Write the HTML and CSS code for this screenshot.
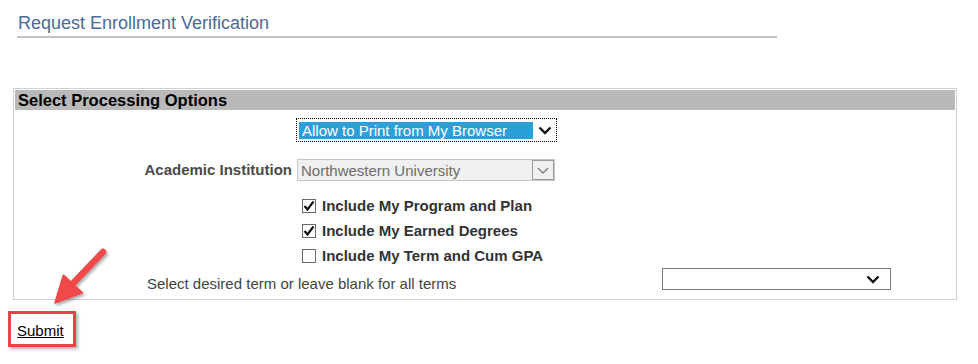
FILE: index.html
```html
<!DOCTYPE html>
<html lang="en">
<head>
<meta charset="utf-8">
<title>Request Enrollment Verification</title>
<link rel="stylesheet" href="styles.css">
</head>
<body>
<div class="page">
  <h1 class="title">Request Enrollment Verification</h1>

  <section class="panel">
    <div class="panel-head">Select Processing Options</div>
    <div class="form">
      <div class="cell-label"></div>
      <div class="cell-ctrl">
        <div class="select select-focus">
          <span class="select-value">Allow to Print from My Browser</span>
          <span class="select-arrow">
            <svg width="14" height="9" viewBox="0 0 14 9"><path d="M1.5 1.5 L7 7 L12.5 1.5" fill="none" stroke="#111" stroke-width="2.4"/></svg>
          </span>
        </div>
      </div>

      <div class="cell-label label-inst">Academic Institution</div>
      <div class="cell-ctrl">
        <div class="select select-disabled">
          <span class="select-value">Northwestern University</span>
          <span class="select-btn">
            <svg width="12" height="7" viewBox="0 0 12 7"><path d="M1 1 L6 6 L11 1" fill="none" stroke="#7a7a7a" stroke-width="1.3"/></svg>
          </span>
        </div>
      </div>

      <div class="cell-label"></div>
      <div class="cell-ctrl checks">
        <label class="check"><span class="box"><svg width="12" height="12" viewBox="0 0 12 12"><path d="M1.5 6 L4.5 9.5 L10.5 1.5" fill="none" stroke="#111" stroke-width="2.2"/></svg></span>Include My Program and Plan</label>
        <label class="check"><span class="box"><svg width="12" height="12" viewBox="0 0 12 12"><path d="M1.5 6 L4.5 9.5 L10.5 1.5" fill="none" stroke="#111" stroke-width="2.2"/></svg></span>Include My Earned Degrees</label>
        <label class="check"><span class="box"></span>Include My Term and Cum GPA</label>
      </div>
    </div>

    <div class="term-row">
      <div class="term-label">Select desired term or leave blank for all terms</div>
      <div class="select select-term">
        <span class="select-value"></span>
        <span class="select-arrow">
          <svg width="14" height="9" viewBox="0 0 14 9"><path d="M1.5 1.5 L7 7 L12.5 1.5" fill="none" stroke="#111" stroke-width="2.4"/></svg>
        </span>
      </div>
    </div>
  </section>

  <div class="submit-wrap"><a class="submit" href="#">Submit</a></div>

  <svg class="callout-arrow" width="80" height="75" viewBox="0 0 80 75">
    <defs>
      <filter id="sh" x="-30%" y="-30%" width="160%" height="160%">
        <feDropShadow dx="1.5" dy="2" stdDeviation="1.5" flood-color="#000" flood-opacity="0.35"/>
      </filter>
    </defs>
    <g filter="url(#sh)" fill="#ef4848" stroke="#ef4848">
      <line x1="63" y1="12" x2="31" y2="45.5" stroke-width="6.5" stroke-linecap="round"/>
      <polygon points="15,63 23.3,35.1 42.3,52.9" stroke-width="1.5" stroke-linejoin="round"/>
    </g>
  </svg>
</div>
</body>
</html>
```

FILE: styles.css
```css
* { box-sizing: border-box; }

body {
  margin: 0;
  background: #fff;
  font-family: "Liberation Sans", Arial, sans-serif;
  font-size: 15px;
  color: #333;
}

.page {
  position: relative;
  width: 978px;
  height: 364px;
  overflow: hidden;
}

.title {
  margin: 0 0 0 17px;
  width: 760px;
  padding: 12px 0 2px 1px;
  font-size: 18px;
  font-weight: normal;
  line-height: 22px;
  color: #4a6a98;
  border-bottom: 2px solid #c2c2c2;
}

.panel {
  margin: 50px 0 0 13px;
  width: 944px;
  border: 1px solid #cdd1d6;
  padding-bottom: 7px;
}

.panel-head {
  margin: 1px 1px 0;
  height: 20px;
  background: #b9b9b9;
  color: #000;
  font-weight: bold;
  font-size: 16.5px;
  line-height: 20px;
  padding-left: 3px;
}

.form {
  display: grid;
  grid-template-columns: 278px 1fr;
  column-gap: 4px;
  padding-top: 8px;
}

.cell-label {
  text-align: right;
  font-weight: bold;
  color: #4a4a4a;
}

.label-inst {
  margin-top: 17px;
  line-height: 22px;
}

.cell-ctrl { display: flex; }

.select {
  display: flex;
  align-items: center;
  font-size: 15px;
  line-height: 17px;
}

.select-focus {
  width: 261px;
  height: 24px;
  border: 1px dotted #000;
  padding: 2px 0 2px 2px;
}

.select-focus .select-value {
  width: 234px;
  height: 17px;
  background: #2a9fd8;
  color: #fff;
  padding-left: 3px;
  white-space: nowrap;
}

.select-arrow {
  flex: 1;
  display: flex;
  justify-content: center;
  align-items: center;
}

.select-disabled {
  margin-top: 17px;
  margin-left: 1px;
  width: 258px;
  height: 22px;
  border: 1px solid #c6c6c6;
  background: #f0f0f0;
  color: #6d6d6d;
  padding-left: 3px;
}

.select-disabled .select-value { flex: 1; white-space: nowrap; }

.select-btn {
  width: 22px;
  height: 20px;
  border: 1px solid #9c9c9c;
  background: #f0f0f0;
  display: flex;
  align-items: center;
  justify-content: center;
}

.checks {
  flex-direction: column;
  margin-top: 12px;
  padding-left: 6px;
}

.check {
  display: flex;
  align-items: center;
  height: 25px;
  font-weight: bold;
  color: #333;
  white-space: nowrap;
}

.box {
  width: 14px;
  height: 14px;
  border: 1px solid #6a6a6a;
  background: #fff;
  margin-right: 6px;
  display: flex;
  align-items: center;
  justify-content: center;
}

.term-row {
  display: grid;
  grid-template-columns: 648px 229px;
}

.term-label {
  padding: 7px 0 0 133px;
  line-height: 17px;
  color: #444;
  white-space: nowrap;
}

.select-term {
  height: 22px;
  border: 1px solid #7a7a7a;
  background: #fff;
}

.select-term .select-value { flex: 1; }
.select-term .select-arrow { flex: 0 0 auto; padding-right: 10px; }

.submit-wrap {
  margin: 11px 0 0 8px;
}

.submit {
  display: inline-block;
  border: 3px solid #e94345;
  padding: 8px 9px 4px 6px;
  line-height: 18px;
  font-size: 15px;
  color: #000;
  text-decoration: underline;
  box-shadow: 2px 2px 3px rgba(0, 0, 0, 0.3);
}

.callout-arrow {
  position: absolute;
  left: 40px;
  top: 240px;
}
```
